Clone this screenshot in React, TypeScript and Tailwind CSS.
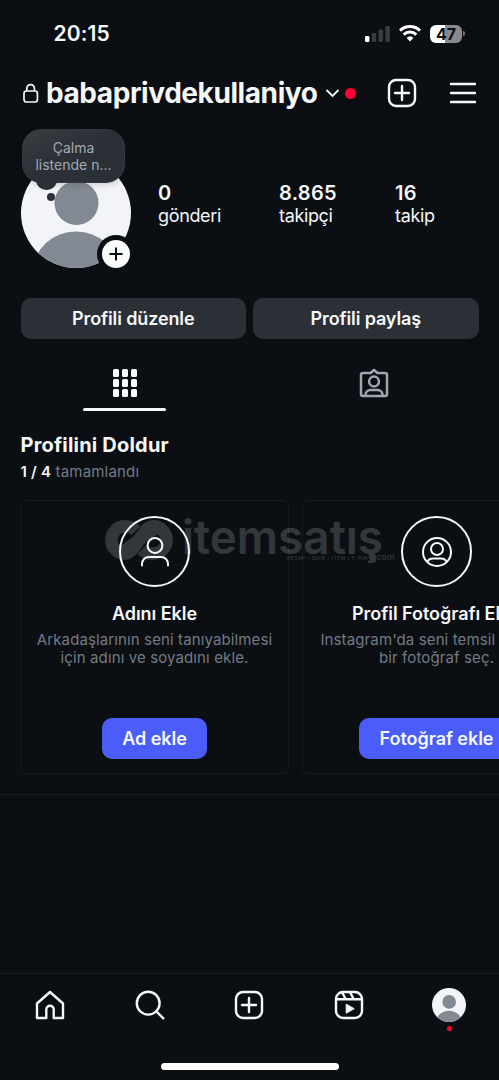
import React from 'react'
import clsx from 'clsx'

const stats = [
  { value: '0', label: 'gönderi', className: 'w-[121px]' },
  { value: '8.865', label: 'takipçi', className: 'w-[116px]' },
  { value: '16', label: 'takip', className: 'w-[80px]' },
]

function PlusSquare() {
  return (
    <svg width="30" height="30" viewBox="0 0 30 30" fill="none" stroke="#f5f7f8" strokeWidth="2.4" strokeLinecap="round">
      <rect x="2" y="2" width="26" height="26" rx="7" />
      <path d="M15 8v14M8 15h14" />
    </svg>
  )
}

function Avatar({ className }: { className?: string }) {
  return (
    <svg viewBox="0 0 110 110" className={className}>
      <defs>
        <clipPath id="face">
          <circle cx="55" cy="55" r="55" />
        </clipPath>
      </defs>
      <g clipPath="url(#face)">
        <rect width="110" height="110" fill="#f2f4f8" />
        <circle cx="55.5" cy="45" r="22" fill="#838993" />
        <ellipse cx="55" cy="112.5" rx="42.5" ry="39" fill="#838993" />
      </g>
    </svg>
  )
}

function StatusBar() {
  return (
    <div className="flex h-[66px] items-center pt-px pr-[34px] pl-[53.5px]">
      <span className="text-[21px] font-semibold tracking-[0.1px]">20:15</span>
      <div className="ml-auto flex items-center">
        <svg width="26" height="16" viewBox="0 0 26 16">
          <rect x="0" y="10" width="4.4" height="6" rx="1.2" fill="#fff" />
          <rect x="6.8" y="7" width="4.4" height="9" rx="1.2" fill="#3a3d40" />
          <rect x="13.6" y="3.5" width="4.4" height="12.5" rx="1.2" fill="#3a3d40" />
          <rect x="20.4" y="0" width="4.4" height="16" rx="1.2" fill="#3a3d40" />
        </svg>
        <svg width="22" height="17" viewBox="0 0 22 17" fill="none" stroke="#fff" strokeWidth="3" className="ml-2">
          <path d="M1 5.6a14.5 14.5 0 0 1 20 0" />
          <path d="M4.7 9.6a9 9 0 0 1 12.6 0" />
          <path d="M11 16.4l-3.4-3.5a5 5 0 0 1 6.8 0z" fill="#fff" stroke="none" />
        </svg>
        <div className="ml-[9px] flex h-[18px] w-8 items-center justify-center rounded-[6px] bg-[linear-gradient(90deg,#fff_47%,#89898b_47%)] text-[16px] font-bold text-[#0b0f14]">
          47
        </div>
        <div className="ml-[1px] h-[5px] w-[2px] rounded-r-full bg-[#77787a]" />
      </div>
    </div>
  )
}

function Header() {
  return (
    <header className="flex h-[54px] items-center pr-[22px] pl-[22px]">
      <svg width="17" height="21" viewBox="0 0 17 21" fill="none" stroke="#f5f7f8" strokeWidth="1.7">
        <rect x="2" y="8" width="13.4" height="11" rx="2.4" />
        <path d="M4.8 8V5.4a3.8 3.8 0 0 1 7.6 0V8" />
      </svg>
      <h1 className="ml-[7px] w-[273px] text-[28px] leading-8 font-bold tracking-[-0.42px] whitespace-nowrap">babaprivdekullaniyo</h1>
      <svg width="15" height="9" viewBox="0 0 15 9" fill="none" stroke="#f5f7f8" strokeWidth="1.8" strokeLinecap="round" className="ml-[6px]">
        <path d="M2 1.5l5.5 5.5L13 1.5" />
      </svg>
      <span className="ml-[5px] size-[11px] rounded-full bg-[#ff0030]" />
      <button className="ml-[31px]">
        <PlusSquare />
      </button>
      <svg width="28" height="22" viewBox="0 0 28 22" stroke="#f5f7f8" strokeWidth="2.4" strokeLinecap="round" className="ml-auto">
        <path d="M2 2h24M2 11h24M2 20h24" />
      </svg>
    </header>
  )
}

function ProfileTop() {
  return (
    <section className="flex h-[178px] pt-[38px] pl-[20.5px]">
      <div className="relative size-[110px]">
        <Avatar className="size-[110px]" />

        {/* Note bubble */}
        <div className="absolute -top-[29px] left-[1.5px] flex h-[54px] w-[103px] items-center justify-center rounded-[19px] border border-[#363a40] bg-linear-to-br from-[#3a3e42] to-[#2b2f36] to-50% text-center text-[14px] leading-[17px] text-[#a3a9b3] shadow-[0_2px_6px_rgba(0,0,0,0.15)]">
          <p className="whitespace-nowrap">
            Çalma
            <br />
            listende n...
          </p>
        </div>
        <div className="absolute top-[22px] left-[15px] h-[10px] w-[21px] rounded-b-full bg-[#2b2f36]" />
        <div className="absolute top-[35px] left-[26px] size-[8px] rounded-full bg-[#2b2f36]" />

        <div className="absolute top-[77px] left-[76.5px] flex size-[38px] items-center justify-center rounded-full bg-[#0b0f14]">
          <div className="flex size-7 items-center justify-center rounded-full bg-[#f9fafb]">
            <svg width="14" height="14" viewBox="0 0 14 14" stroke="#0b0f14" strokeWidth="2" strokeLinecap="round">
              <path d="M7 1.2v11.6M1.2 7h11.6" />
            </svg>
          </div>
        </div>
      </div>

      <div className="flex pt-[23px] pl-[27.5px]">
        {stats.map((s) => (
          <div key={s.label} className={s.className}>
            <div className="text-[20px] leading-6 font-semibold tracking-[0.3px]">{s.value}</div>
            <div className="text-[18px] leading-[22px] tracking-[-0.35px]">{s.label}</div>
          </div>
        ))}
      </div>
    </section>
  )
}

function Tabs() {
  return (
    <div className="flex h-[72px]">
      <div className="flex w-[249px] flex-col items-center pt-[30px]">
        <div className="grid grid-cols-3 gap-x-[3px] gap-y-[2px]">
          {Array.from({ length: 9 }).map((_, i) => (
            <span key={i} className="h-[8px] w-[6px] rounded-[1.5px] bg-[#f9fafb]" />
          ))}
        </div>
        <div className="mt-[11px] h-[3px] w-[83px] rounded-full bg-[#f5f7f8]" />
      </div>
      <div className="flex flex-1 justify-center pt-[29px]">
        <svg width="30" height="30" viewBox="0 0 30 30" fill="none" stroke="#a0a7b1" strokeWidth="2.5" strokeLinejoin="round">
          <path d="M4 5h7.5L15 2l3.5 3H26a2 2 0 0 1 2 2v19a2 2 0 0 1-2 2H4a2 2 0 0 1-2-2V7a2 2 0 0 1 2-2z" />
          <circle cx="15" cy="13.5" r="4.9" />
          <path d="M6.5 28v-1.2c0-2.8 2.2-4.8 5-4.8h7c2.8 0 5 2 5 4.8V28" />
        </svg>
      </div>
    </div>
  )
}

interface TaskCardProps {
  icon: React.ReactNode
  title: string
  lines: string[]
  action: string
  actionClass: string
}

function TaskCard({ icon, title, lines, action, actionClass }: TaskCardProps) {
  return (
    <div className="flex h-[274px] w-[269px] shrink-0 flex-col items-center rounded-[6px] border border-[#171b20] pt-[15px]">
      <div className="flex size-[71px] items-center justify-center rounded-full border-2 border-[#f5f7f8]">{icon}</div>
      <h3 className="mt-[15px] text-[18px] leading-6 font-semibold tracking-[-0.05px] whitespace-nowrap">{title}</h3>
      <p className="mt-[5px] text-center text-[15px] leading-[18px] tracking-[0.12px] whitespace-nowrap text-[#747a84]">
        {lines[0]}
        <br />
        {lines[1]}
      </p>
      <button className={clsx('mt-[51px] h-[41px] shrink-0 rounded-[10px] bg-[#4a5df9] text-[18px] font-semibold tracking-[-0.05px]', actionClass)}>
        {action}
      </button>
    </div>
  )
}

function Watermark() {
  return (
    <svg
      width="292"
      height="48"
      viewBox="0 0 292 48"
      className="pointer-events-none absolute top-[16px] left-[104px] opacity-[0.16]"
      fill="#fff"
    >
      {/* interlocked S mark */}
      <g fill="none" stroke="#fff">
        <path
          d="M32 14.5C29 11.5 25.500 10.300 21 10.300A13.700 13.700 0 1 0 21 37.700C32 37.700 38 10.300 49 10.300A13.700 13.700 0 1 1 49 37.700C45 37.700 41 36.500 38 33.500"
          strokeWidth="12.5"
        />
        <path d="M20 35L50 13" strokeWidth="12.5" />
      </g>
      <text x="78" y="37.5" fontSize="47" fontWeight="600" fontFamily="Inter, sans-serif" textLength="201" lengthAdjust="spacingAndGlyphs">
        itemsatış
      </text>
      <text x="183" y="43.5" fontSize="4.6" fontWeight="500" fontFamily="Inter, sans-serif" textLength="80">
        HESAP / SKIN / ITEM / E-PIN
      </text>
      <circle cx="268.5" cy="41" r="3.5" />
      <text x="272.5" y="43.5" fontSize="8.5" fontWeight="500" fontFamily="Inter, sans-serif" textLength="18">
        com
      </text>
    </svg>
  )
}

function BottomNav() {
  return (
    <nav className="h-[107px] border-t border-[#1a1e23]">
      <div className="flex h-[62px] items-center">
        <div className="flex flex-1 justify-center">
          <svg width="30" height="30" viewBox="0 0 30 30" fill="none" stroke="#f5f7f8" strokeWidth="2.4" strokeLinejoin="round">
            <path d="M2 28V13.5L15 2l13 11.5V28h-9.3v-8.6a3.7 3.7 0 0 0-7.4 0V28z" />
          </svg>
        </div>
        <div className="flex flex-1 justify-center">
          <svg width="30" height="30" viewBox="0 0 30 30" fill="none" stroke="#f5f7f8" strokeWidth="2.4" strokeLinecap="round">
            <circle cx="13.2" cy="13.2" r="11.4" />
            <path d="M21.3 21.3l7 7" />
          </svg>
        </div>
        <div className="flex flex-1 justify-center">
          <PlusSquare />
        </div>
        <div className="flex flex-1 justify-center">
          <svg width="30" height="30" viewBox="0 0 30 30" fill="none" stroke="#f5f7f8" strokeWidth="2.4">
            <rect x="2" y="2" width="26" height="26" rx="7" />
            <path d="M2.5 9.3h25M8 2.3l3.8 7M16 2.3l3.8 7" />
            <path d="M12.2 14.2v9l8-4.5z" fill="#f5f7f8" strokeWidth="1" strokeLinejoin="round" />
          </svg>
        </div>
        <div className="relative flex flex-1 justify-center">
          <Avatar className="size-[34px]" />
          <span className="absolute top-[38px] size-[5px] rounded-full bg-[#ff0030]" />
        </div>
      </div>
      <div className="mx-auto mt-[27px] h-[7px] w-[178px] rounded-full bg-white" />
    </nav>
  )
}

export default function App() {
  return (
    <div className="flex h-[1080px] w-[499px] flex-col overflow-hidden bg-[#0b0f14] font-['Inter',sans-serif] text-[#f5f7f8]">
      <StatusBar />
      <Header />
      <ProfileTop />

      {/* Action buttons */}
      <div className="flex gap-[7px] px-[20.5px] text-[18px] font-semibold tracking-[-0.12px]">
        <button className="h-[41px] flex-1 rounded-[10px] bg-[#2b2f36]">Profili düzenle</button>
        <button className="h-[41px] flex-1 rounded-[10px] bg-[#2b2f36]">Profili paylaş</button>
      </div>

      <Tabs />

      <div className="h-[89px] pt-[22px] pl-[20.5px]">
        <h2 className="text-[20px] leading-6 font-bold tracking-[0.2px]">Profilini Doldur</h2>
        <p className="mt-[5px] text-[15px] leading-5 tracking-[0.2px] text-[#747a84]">
          <span className="font-semibold text-[#f5f7f8]">1 / 4</span> tamamlandı
        </p>
      </div>

      <div className="relative flex gap-[13px] pl-5">
        <Watermark />
        <TaskCard
          icon={
            <svg width="30" height="32" viewBox="0 0 30 32" fill="none" stroke="#f5f7f8" strokeWidth="2" strokeLinecap="round">
              <circle cx="15" cy="9.5" r="7.4" />
              <path d="M2 29.5V28c0-4 3-7 7-7h12c4 0 7 3 7 7v1.5" />
            </svg>
          }
          title="Adını Ekle"
          lines={['Arkadaşlarının seni tanıyabilmesi', 'için adını ve soyadını ekle.']}
          action="Ad ekle"
          actionClass="w-[105px]"
        />
        <TaskCard
          icon={
            <svg width="30" height="30" viewBox="0 0 30 30" fill="none" stroke="#f5f7f8" strokeWidth="2">
              <circle cx="15" cy="15" r="14" />
              <circle cx="15" cy="12" r="6" />
              <path d="M5.5 25c.8-2.3 3-3.5 5.5-3.5h8c2.5 0 4.7 1.2 5.5 3.5" />
            </svg>
          }
          title="Profil Fotoğrafı Ekle"
          lines={["Instagram'da seni temsil edecek", 'bir fotoğraf seç.']}
          action="Fotoğraf ekle"
          actionClass="w-[155px]"
        />
      </div>

      <div className="mt-5 border-t border-[#1a1e23]" />
      <div className="flex-1" />
      <BottomNav />
    </div>
  )
}
